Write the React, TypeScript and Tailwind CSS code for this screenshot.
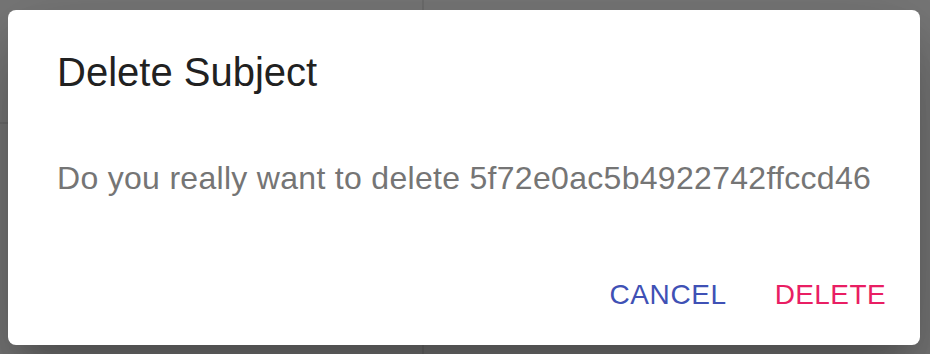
const App = () => {
  return (
    <div className="relative w-[930px] h-[354px] overflow-hidden bg-[#f0f0f0] font-['Liberation_Sans',Arial,sans-serif]">
      {/* page behind the modal */}
      <div className="flex h-full">
        <div className="w-[424px] border-r-2 border-[#dcdcdc]">
          <div className="h-[124px] border-b-2 border-[#dcdcdc]" />
        </div>
        <div className="flex-1" />
      </div>

      {/* backdrop + dialog */}
      <div className="absolute inset-0 bg-black/50">
        <div className="absolute left-[8px] top-[10px] w-[912px] h-[335px] flex flex-col rounded-[8px] bg-white shadow-[0_22px_30px_-14px_rgba(0,0,0,0.2),0_48px_76px_6px_rgba(0,0,0,0.14),0_18px_92px_16px_rgba(0,0,0,0.12)]">
          <h2 className="pt-[30px] pl-[49px] pr-[48px] text-[40px] leading-[64px] text-[#212121]">
            Delete Subject
          </h2>
          <p className="mt-[50px] pl-[49px] pr-[32px] whitespace-nowrap text-[32px] leading-[48px] tracking-[0.3px] text-[#757575]">
            Do you really want to delete 5f72e0ac5b4922742ffccd46
          </p>
          <div className="mt-[56px] pb-[14px] pl-[16px] pr-[18px] flex justify-end gap-[16px]">
            <button className="px-[16px] py-[12px] text-[28px] leading-[49px] tracking-[0.6px] uppercase text-[#3f51b5]">
              Cancel
            </button>
            <button className="px-[16px] py-[12px] text-[28px] leading-[49px] tracking-[0.4px] uppercase text-[#e91e63]">
              Delete
            </button>
          </div>
        </div>
      </div>
    </div>
  );
};

export default App;
